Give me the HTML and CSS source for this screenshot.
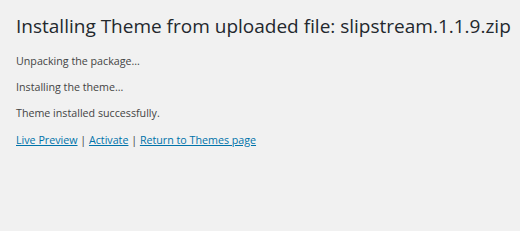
FILE: index.html
```html
<!DOCTYPE html>
<html lang="en">
<head>
    <meta charset="UTF-8">
    <title>Install Theme</title>
    <link rel="stylesheet" href="styles.css">
</head>
<body>
    <div class="wrap">
        <h1>Installing Theme from uploaded file: slipstream.1.1.9.zip</h1>
        <p>Unpacking the package&hellip;</p>
        <p>Installing the theme&hellip;</p>
        <p>Theme installed successfully.</p>
        <p class="actions">
            <a href="#">Live Preview</a> | <a href="#">Activate</a> | <a href="#">Return to Themes page</a>
        </p>
    </div>
</body>
</html>
```

FILE: styles.css
```css
body {
    margin: 0;
    background: #f1f1f1;
    color: #444;
    font-family: "Open Sans", sans-serif;
    font-size: 10.7px;
}
.wrap {
    padding: 14px 0 0 16px;
}
h1 {
    font-size: 19px;
    font-weight: 400;
    color: #23282d;
    margin: 0 0 16px;
    line-height: 24px;
    white-space: nowrap;
}
p {
    margin: 0 0 11px;
    line-height: 15px;
}
.actions {
    margin-top: 12px;
}
a {
    color: #0073aa;
}
```
